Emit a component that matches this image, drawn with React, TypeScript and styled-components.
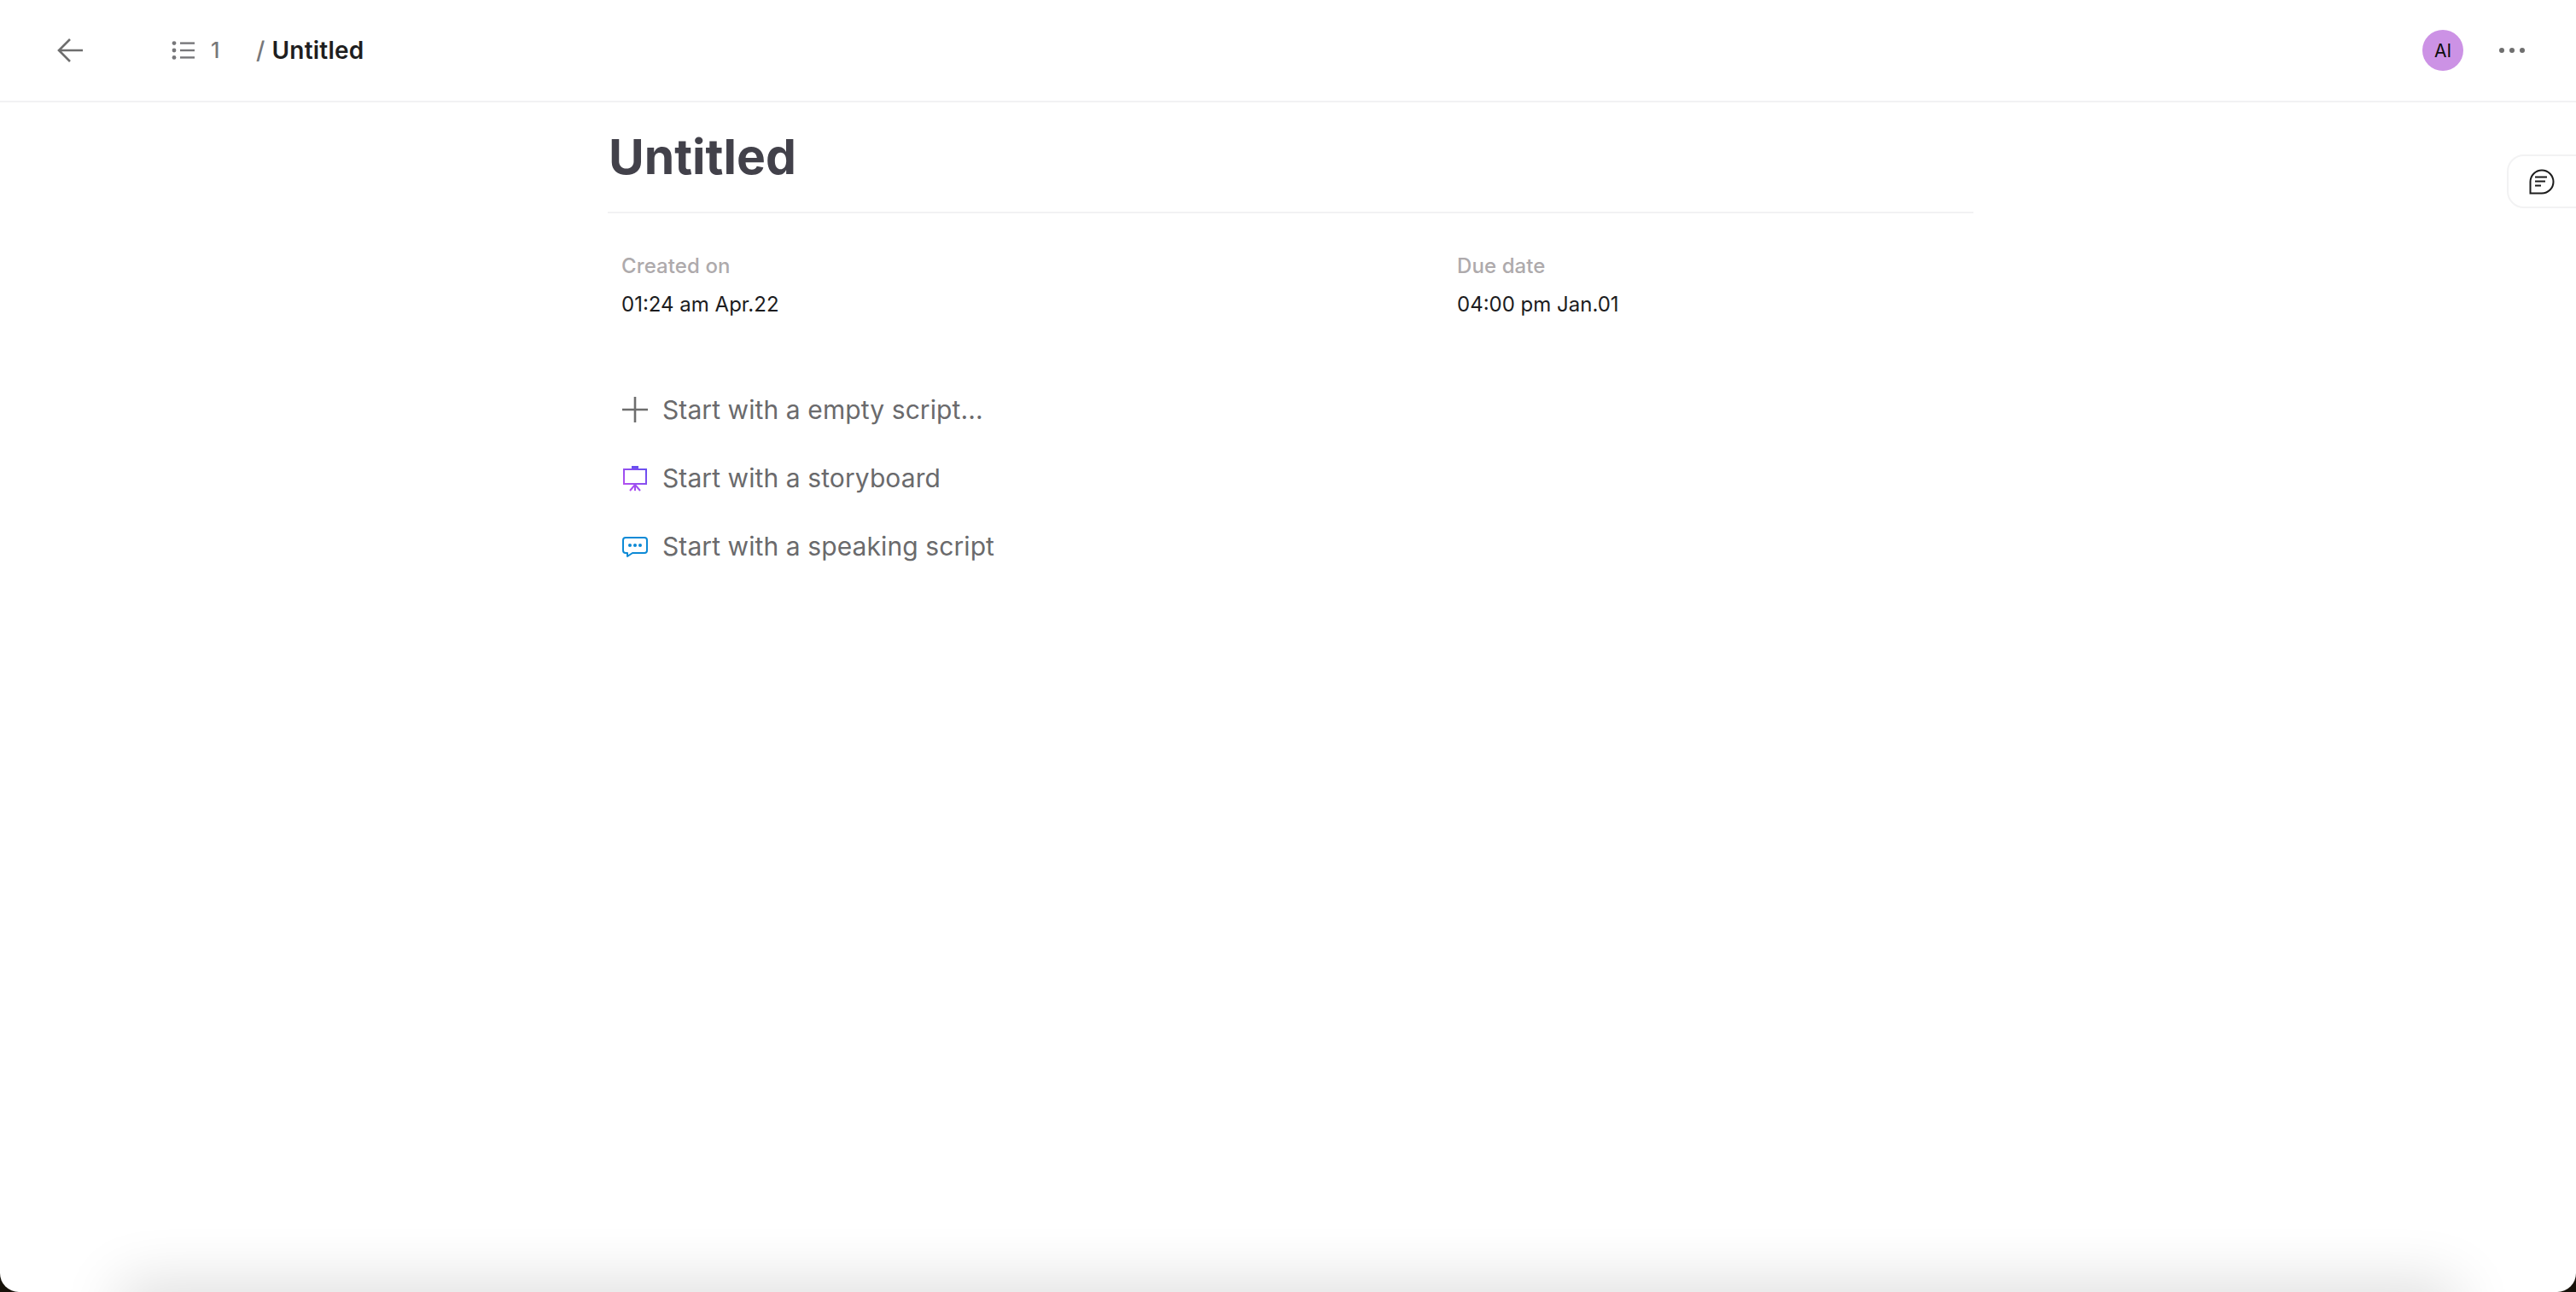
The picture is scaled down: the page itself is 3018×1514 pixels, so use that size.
import React from "react";
import styled, { createGlobalStyle } from "styled-components";

const Global = createGlobalStyle`
  html, body { margin: 0; padding: 0; height: 100%; background: #17120a; }
  #root { height: 100%; }
  * { box-sizing: border-box; }
`;

const Page = styled.div`
  position: relative;
  width: 3018px;
  height: 1514px;
  background: #fff;
  border-radius: 0 0 22px 22px;
  overflow: hidden;
  font-family: Inter, "Liberation Sans", sans-serif;
`;

const Header = styled.header`
  height: 120px;
  border-bottom: 2px solid #f2f2f3;
  display: flex;
  align-items: center;
  padding: 0 60px 0 64px;
`;

const BackButton = styled.div`
  display: flex;
  width: 36px;
  height: 36px;
  margin-right: 101px;
  color: #6e6e6e;
`;

const Outline = styled.div`
  display: flex;
  align-items: center;
  gap: 18px;
  color: #77777a;
  font-size: 25px;
  font-weight: 500;
  width: 99px;
`;

const Crumb = styled.div`
  display: flex;
  align-items: baseline;
  gap: 8px;
  font-size: 28px;
  font-weight: 600;
  letter-spacing: 0.2px;
  color: #1e1e20;
`;

const Slash = styled.span`
  color: #77777a;
  font-weight: 500;
`;

const HeaderRight = styled.div`
  margin-left: auto;
  display: flex;
  align-items: center;
  gap: 42px;
`;

const Avatar = styled.div`
  width: 48px;
  height: 48px;
  border-radius: 50%;
  background: #cc92e5;
  color: #0c0c0c;
  font-size: 21px;
  display: flex;
  align-items: center;
  justify-content: center;
`;

const Dots = styled.div`
  display: flex;
  gap: 6px;
`;

const Dot = styled.i`
  width: 6px;
  height: 6px;
  border-radius: 50%;
  background: #6f6f6f;
`;

const Main = styled.main`
  width: 1600px;
  margin-left: 712px;
`;

const Title = styled.h1`
  margin: 0;
  height: 130px;
  border-bottom: 2px solid #f2f2f3;
  padding: 28px 0 0 1px;
  font-size: 57px;
  line-height: 72px;
  font-weight: 700;
  color: #42414a;
`;

const Meta = styled.section`
  display: grid;
  grid-template-columns: 979px 1fr;
  padding: 47px 16px 0;
`;

const Label = styled.div`
  font-size: 24px;
  line-height: 30px;
  font-weight: 500;
  letter-spacing: 0.1px;
  color: #aeaaac;
`;

const Value = styled.div`
  margin-top: 15px;
  font-size: 24px;
  line-height: 30px;
  color: #1c1c1e;
`;

const StartList = styled.div`
  display: flex;
  flex-direction: column;
  gap: 32px;
  margin-top: 84px;
  padding-left: 16px;
`;

const StartRow = styled.div`
  display: flex;
  align-items: center;
  gap: 16px;
  height: 48px;
  font-size: 30px;
  letter-spacing: 0.09px;
  color: #6a6a6c;
`;

const IconSlot = styled.span`
  display: flex;
  width: 32px;
  height: 32px;
  flex: none;
`;

const CommentTab = styled.div`
  position: absolute;
  top: 181px;
  right: -2px;
  width: 83px;
  height: 63px;
  border: 2px solid #f2f2f3;
  border-radius: 20px 0 0 20px;
  display: flex;
  align-items: center;
  padding-left: 24px;
`;

const BottomShadow = styled.div`
  position: absolute;
  left: 150px;
  right: 150px;
  bottom: -50px;
  height: 50px;
  box-shadow: 0 0 70px 10px rgba(0, 0, 0, 0.14);
`;

export default function App() {
  return (
    <>
      <Global />
      <Page>
        <Header>
          <BackButton>
            <svg width="36" height="36" viewBox="0 0 36 36" fill="none" stroke="currentColor" strokeWidth="2.6">
              <path d="M33 18H5M18 5 5 18l13 13" />
            </svg>
          </BackButton>
          <Outline>
            <svg width="28" height="22" viewBox="0 0 28 22" fill="#77777a">
              <circle cx="3" cy="2.6" r="2.4" />
              <circle cx="3" cy="11" r="2.4" />
              <circle cx="3" cy="19.4" r="2.4" />
              <rect x="10" y="1.4" width="17" height="2.4" />
              <rect x="10" y="9.8" width="17" height="2.4" />
              <rect x="10" y="18.2" width="17" height="2.4" />
            </svg>
            1
          </Outline>
          <Crumb>
            <Slash>/</Slash>
            Untitled
          </Crumb>
          <HeaderRight>
            <Avatar>AI</Avatar>
            <Dots>
              <Dot />
              <Dot />
              <Dot />
            </Dots>
          </HeaderRight>
        </Header>
        <Main>
          <Title>Untitled</Title>
          <Meta>
            <div>
              <Label>Created on</Label>
              <Value>01:24 am Apr.22</Value>
            </div>
            <div>
              <Label>Due date</Label>
              <Value>04:00 pm Jan.01</Value>
            </div>
          </Meta>
          <StartList>
            <StartRow>
              <IconSlot>
                <svg width="32" height="32" viewBox="0 0 32 32" stroke="#6e6e6e" strokeWidth="2.6">
                  <path d="M1 16h30M16 1v30" />
                </svg>
              </IconSlot>
              Start with a empty script...
            </StartRow>
            <StartRow>
              <IconSlot>
                <svg width="32" height="32" viewBox="0 0 32 32" fill="none">
                  <defs>
                    <linearGradient id="board" gradientUnits="userSpaceOnUse" x1="2" y1="30" x2="30" y2="2">
                      <stop offset="0" stopColor="#c04ff0" />
                      <stop offset="1" stopColor="#5f4ff0" />
                    </linearGradient>
                  </defs>
                  <rect x="12" y="2" width="8" height="3" fill="#6a4ff0" />
                  <path
                    d="M3 6h26v17H3zM16 24l-6 7M16 24v7M16 24l6 7"
                    stroke="url(#board)"
                    strokeWidth="2"
                  />
                </svg>
              </IconSlot>
              Start with a storyboard
            </StartRow>
            <StartRow>
              <IconSlot>
                <svg width="32" height="32" viewBox="0 0 32 32" fill="none">
                  <path
                    d="M5 6h22a3 3 0 0 1 3 3v12a3 3 0 0 1-3 3H13l-6 4v-4H5a3 3 0 0 1-3-3V9a3 3 0 0 1 3-3z"
                    stroke="#0d8ad6"
                    strokeWidth="2"
                    strokeLinejoin="round"
                  />
                  <circle cx="10" cy="15" r="2" fill="#0d8ad6" />
                  <circle cx="16" cy="15" r="2" fill="#0d8ad6" />
                  <circle cx="22" cy="15" r="2" fill="#0d8ad6" />
                </svg>
              </IconSlot>
              Start with a speaking script
            </StartRow>
          </StartList>
        </Main>
        <CommentTab>
          <svg width="30" height="30" viewBox="0 0 30 30" fill="none" stroke="#1c1c1c" strokeWidth="2">
            <path d="M15 1.5a13.5 13.5 0 0 1 0 27H1.5V15A13.5 13.5 0 0 1 15 1.5z" />
            <path d="M7 9.5h14M7 14.5h12M7 19.5h7" />
          </svg>
        </CommentTab>
        <BottomShadow />
      </Page>
    </>
  );
}
